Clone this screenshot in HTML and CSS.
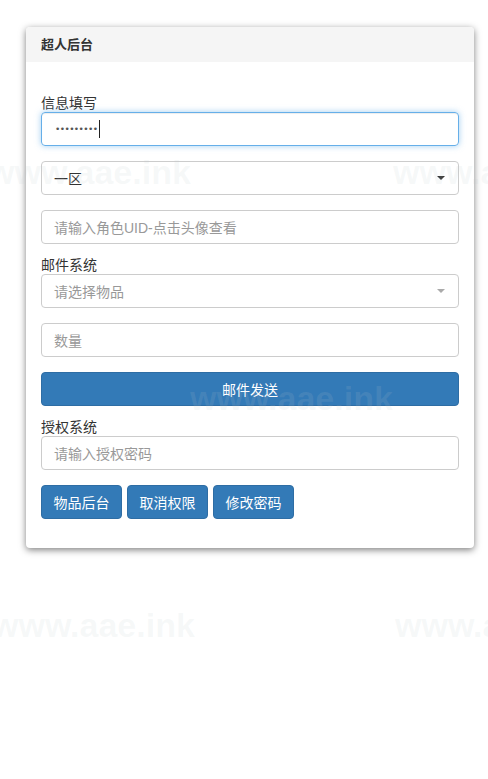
FILE: index.html
```html
<!DOCTYPE html>
<html lang="zh">
<head>
<meta charset="utf-8">
<title>超人后台</title>
<link rel="stylesheet" href="styles.css">
</head>
<body>
<div class="page">
  <div class="card">
    <div class="card-head">超人后台</div>
    <div class="card-body">
      <label class="lbl">信息填写</label>
      <div class="field focus"><span class="dots">•••••••••</span><span class="caret-line"></span></div>
      <div class="field select gap"><span class="val">一区</span><span class="tri"></span></div>
      <div class="field gap"><span class="ph">请输入角色UID-点击头像查看</span></div>
      <label class="lbl lbl-after">邮件系统</label>
      <div class="field select"><span class="ph">请选择物品</span><span class="tri light"></span></div>
      <div class="field gap"><span class="ph">数量</span></div>
      <button class="btn btn-block gap">邮件发送</button>
      <label class="lbl lbl-after">授权系统</label>
      <div class="field"><span class="ph">请输入授权密码</span></div>
      <div class="btn-row">
        <button class="btn">物品后台</button>
        <button class="btn">取消权限</button>
        <button class="btn">修改密码</button>
      </div>
    </div>
  </div>
</div>
<div class="wm wm1">www.aae.ink</div>
<div class="wm wm2">www.aae.ink</div>
<div class="wm wm3">www.aae.ink</div>
<div class="wm wm4">www.aae.ink</div>
<div class="wm wm5">www.aae.ink</div>
</body>
</html>
```
FILE: styles.css
```css
html, body {
  margin: 0;
  padding: 0;
  background: #fff;
}
body {
  font-family: "Liberation Sans", "Noto Sans CJK SC", sans-serif;
  font-size: 14px;
  color: #333;
  position: relative;
  min-height: 779px;
  overflow: hidden;
}
.page {
  padding: 27px 0 0 26px;
}
.card {
  width: 448px;
  background: #fff;
  border-radius: 4px;
  box-shadow: 0 2px 7px rgba(0, 0, 0, 0.5);
  overflow: hidden;
}
.card-head {
  height: 35px;
  line-height: 35px;
  background: #f5f5f5;
  padding: 0 15px;
  font-weight: bold;
  font-size: 13px;
  color: #333;
}
.card-body {
  padding: 32px 15px 29px;
  display: flex;
  flex-direction: column;
}
.lbl {
  display: block;
  height: 18px;
  line-height: 18px;
  font-size: 14px;
  color: #333;
}
.lbl-after {
  margin-top: 12px;
}
.field {
  box-sizing: border-box;
  height: 34px;
  border: 1px solid #ccc;
  border-radius: 4px;
  padding: 0 12px;
  display: flex;
  align-items: center;
  font-size: 14px;
  color: #555;
  position: relative;
}
.gap {
  margin-top: 15px;
}
.focus {
  border-color: #66afe9;
  box-shadow: inset 0 1px 1px rgba(0, 0, 0, .075), 0 0 6px rgba(102, 175, 233, .6);
}
.dots {
  font-family: "DejaVu Sans", sans-serif;
  font-size: 9px;
  letter-spacing: -0.6px;
  color: #555;
  padding-left: 1px;
}
.caret-line {
  display: inline-block;
  width: 1px;
  height: 18px;
  background: #222;
  margin-left: 2px;
}
.ph {
  color: #999;
}
.val {
  color: #333;
}
.select {
  justify-content: space-between;
}
.tri {
  width: 0;
  height: 0;
  border-left: 4px solid transparent;
  border-right: 4px solid transparent;
  border-top: 4px solid #333;
  margin-right: 1px;
}
.tri.light {
  border-top-color: #aaa;
}
.btn {
  font-family: "Liberation Sans", "Noto Sans CJK SC", sans-serif;
  font-size: 14px;
  height: 34px;
  padding: 0 12px;
  background: #337ab7;
  border: 1px solid #2e6da4;
  border-radius: 4px;
  color: #fff;
  cursor: pointer;
}
.btn-block {
  width: 100%;
}
.btn-row {
  margin-top: 15px;
  display: flex;
  gap: 5px;
}
.btn-row .btn {
  width: 81px;
  padding: 0;
}
.wm {
  position: absolute;
  font-family: "Liberation Sans", sans-serif;
  font-weight: bold;
  font-size: 34px;
  line-height: 40px;
  color: rgba(190, 200, 205, 0.13);
  pointer-events: none;
  white-space: nowrap;
}
.wm1 { left: -12px; top: 152px; }
.wm2 { left: 393px; top: 152px; }
.wm3 { left: 190px; top: 378px; }
.wm4 { left: -8px; top: 605px; }
.wm5 { left: 395px; top: 605px; }
```
